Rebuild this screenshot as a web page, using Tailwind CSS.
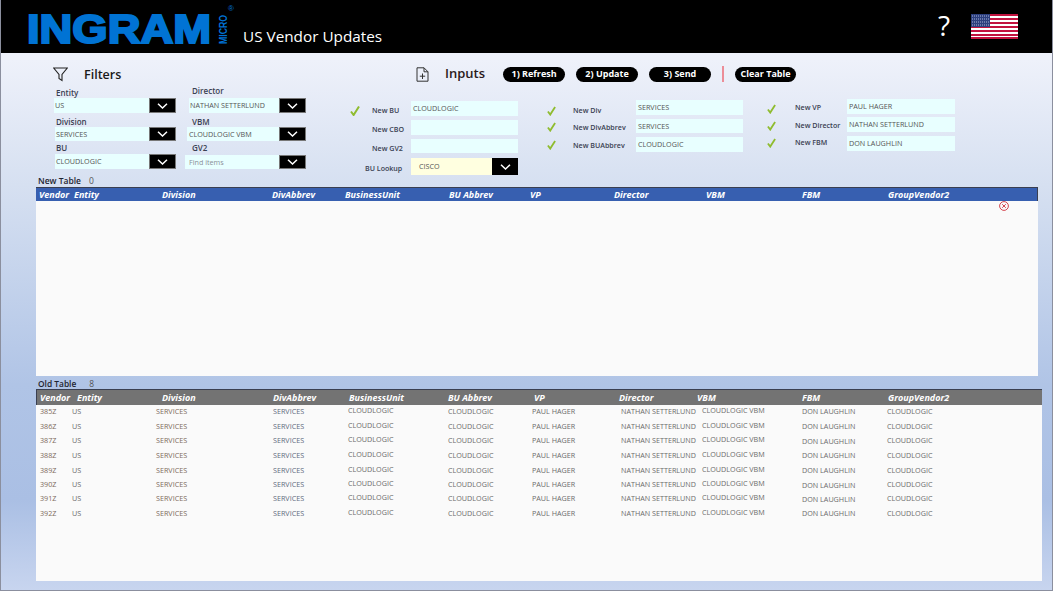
<!DOCTYPE html>
<html lang="en">
<head>
    <meta charset="UTF-8">
    <title>US Vendor Updates</title>
    <script src="https://cdn.jsdelivr.net/npm/@tailwindcss/browser@4"></script>
</head>
<body class="m-0 overflow-hidden font-['Open_Sans',sans-serif]">
<div class="flex h-[591px] w-[1053px] flex-col border-x border-b border-[#8b8f9e] bg-[linear-gradient(180deg,#eff2fb_0,#eef1fa_60px,#d6e0f1_185px,#b0c4e6_385px,#aabfe4_500px,#c8d5ef_591px)]">

    <!-- Header -->
    <header class="relative flex h-[53px] shrink-0 items-center bg-black">
        <svg class="ml-[25px] h-[53px] w-[215px] shrink-0" viewBox="0 0 215 53">
            <text x="1" y="43" textLength="184" lengthAdjust="spacingAndGlyphs" font-family="Liberation Sans" font-weight="700" font-size="41" fill="#0073d4" stroke="#0073d4" stroke-width="2.2">INGRAM</text>
            <text transform="translate(201 44) rotate(-90)" textLength="29" lengthAdjust="spacingAndGlyphs" font-family="Liberation Sans" font-weight="700" font-size="10" fill="#0073d4">MICRO</text>
            <text x="202" y="11" font-family="Liberation Sans" font-size="8" fill="#0073d4">®</text>
        </svg>
        <h1 class="ml-[2px] mt-[19px] text-[15.3px] leading-[20px] text-white">US Vendor Updates</h1>
        <span class="absolute left-[937px] top-[8px] text-[28px] leading-[34px] font-medium text-white">?</span>
        <svg class="absolute left-[970px] top-[14px] h-[25px] w-[47px]" viewBox="0 0 47 25">
            <rect width="47" height="25" fill="#fff"/>
            <path d="M0 1h47M0 5h47M0 9h47M0 13h47M0 17h47M0 21h47M0 24h47" stroke="#c2123f" stroke-width="2"/>
            <rect width="19" height="13" fill="#2c3f7e"/>
            <path d="M1 2h17M1 5h17M1 8h17M1 11h17" stroke="#aab4d6" stroke-width="1" stroke-dasharray="1 1"/>
        </svg>
    </header>

    <!-- Filters and inputs -->
    <section class="flex h-[134px] shrink-0 text-[8px] font-semibold text-[#3a4152]">
        <div class="ml-[52px] w-[263px] shrink-0">
            <div class="flex h-[35px] items-end gap-[16px] pb-[4px] text-[12.5px] leading-[18px] font-semibold text-[#1a1a1a]">
                <svg class="mb-[2px] h-[15px] w-[15px]" viewBox="0 0 15 15" fill="none" stroke="#222" stroke-width="1.1"><path d="M.7 1h13.6L9 7.5V13.5L6 11.5V7.5z"/></svg>
                <span>Filters</span>
            </div>
            <div class="flex">
                <div class="w-[136px] shrink-0">
                    <p class="h-[10px] pl-[3px] text-[8px] leading-[10px]">Entity</p>
                    <div class="flex h-[15px]"><div class="ml-[1px] flex w-[95px] items-center bg-[#e8ffff] pl-[1px] text-[7.2px] font-normal text-[#555]">US</div><div class="flex w-[27px] items-center justify-center border border-[#777] bg-black"><svg class="h-[6px] w-[11px]" viewBox="0 0 11 6" fill="none" stroke="#fff" stroke-width="1.5"><path d="M1 .8 5.5 5 10 .8"/></svg></div></div>
                    <p class="mt-[4px] h-[10px] pl-[3px] text-[8px] leading-[10px]">Division</p>
                    <div class="flex h-[14px]"><div class="ml-[2px] flex w-[94px] items-center bg-[#e8ffff] pl-[1px] text-[7.2px] font-normal text-[#555]">SERVICES</div><div class="flex w-[27px] items-center justify-center border border-[#777] bg-black"><svg class="h-[6px] w-[11px]" viewBox="0 0 11 6" fill="none" stroke="#fff" stroke-width="1.5"><path d="M1 .8 5.5 5 10 .8"/></svg></div></div>
                    <p class="mt-[2px] h-[10px] pl-[3px] text-[8px] leading-[10px]">BU</p>
                    <div class="mt-[1px] flex h-[15px]"><div class="ml-[2px] flex w-[94px] items-center bg-[#e8ffff] pl-[1px] text-[7.2px] font-normal text-[#555]">CLOUDLOGIC</div><div class="flex w-[27px] items-center justify-center border border-[#777] bg-black"><svg class="h-[6px] w-[11px]" viewBox="0 0 11 6" fill="none" stroke="#fff" stroke-width="1.5"><path d="M1 .8 5.5 5 10 .8"/></svg></div></div>
                </div>
                <div class="w-[127px] shrink-0">
                    <p class="-mt-[2px] h-[10px] pl-[3px] text-[8px] leading-[10px]">Director</p>
                    <div class="mt-[2px] flex h-[15px]"><div class="flex w-[90px] items-center bg-[#e8ffff] pl-[1px] text-[7.2px] font-normal text-[#555]">NATHAN SETTERLUND</div><div class="flex w-[27px] items-center justify-center border border-[#777] bg-black"><svg class="h-[6px] w-[11px]" viewBox="0 0 11 6" fill="none" stroke="#fff" stroke-width="1.5"><path d="M1 .8 5.5 5 10 .8"/></svg></div></div>
                    <p class="mt-[4px] h-[10px] pl-[3px] text-[8px] leading-[10px]">VBM</p>
                    <div class="flex h-[14px]"><div class="-ml-[2px] flex w-[92px] items-center bg-[#e8ffff] pl-[2px] text-[7.2px] font-normal text-[#555]">CLOUDLOGIC VBM</div><div class="flex w-[27px] items-center justify-center border border-[#777] bg-black"><svg class="h-[6px] w-[11px]" viewBox="0 0 11 6" fill="none" stroke="#fff" stroke-width="1.5"><path d="M1 .8 5.5 5 10 .8"/></svg></div></div>
                    <p class="mt-[2px] h-[10px] pl-[3px] text-[8px] leading-[10px]">GV2</p>
                    <div class="mt-[2px] flex h-[14px]"><div class="-ml-[4px] flex w-[94px] items-center bg-[#e8ffff] pl-[4px] text-[7.2px] font-normal text-[#8a8f98]">Find items</div><div class="flex w-[27px] items-center justify-center border border-[#777] bg-black"><svg class="h-[6px] w-[11px]" viewBox="0 0 11 6" fill="none" stroke="#fff" stroke-width="1.5"><path d="M1 .8 5.5 5 10 .8"/></svg></div></div>
                </div>
            </div>
        </div>

        <div class="w-[700px] shrink-0">
            <!-- Title and action buttons -->
            <div class="flex h-[29px] items-end pl-[100px]">
                <svg class="h-[15px] w-[13px]" viewBox="0 0 13 15" fill="none" stroke="#333" stroke-width="1"><path d="M1 .8h7l4 4v9.4H1zM8 .8v4h4M6.5 6.5v5.5M3.8 9.2h5.4"/></svg>
                <span class="ml-[16px] text-[13px] leading-[17px] font-semibold text-[#2a1a1a]">Inputs</span>
                <div class="ml-[18px] flex items-center text-[9px] font-bold text-white">
                    <span class="flex h-[15px] w-[62px] items-center justify-center rounded-full bg-black">1) Refresh</span>
                    <span class="ml-[11px] flex h-[15px] w-[62px] items-center justify-center rounded-full bg-black">2) Update</span>
                    <span class="ml-[11px] flex h-[15px] w-[62px] items-center justify-center rounded-full bg-black">3) Send</span>
                    <span class="ml-[11px] h-[16px] w-[2px] bg-[#ec8d98]"></span>
                    <span class="ml-[11px] flex h-[15px] w-[61px] items-center justify-center rounded-full bg-black">Clear Table</span>
                </div>
            </div>
            <!-- Input columns -->
            <div class="flex pt-[19px]">
                <div class="ml-[33px] w-[175px] shrink-0">
                    <div class="flex h-[15px] items-center"><svg class="ml-[1px] mt-[4px] h-[10px] w-[10px]" viewBox="0 0 10 10" fill="none" stroke="#8fbc2f" stroke-width="2"><path d="M1 5.5 3.6 9 9 .5"/></svg><span class="ml-[12px] mt-[4px] w-[39px] text-[7.1px]">New BU</span><div class="flex h-[15px] w-[107px] items-center bg-[#e8ffff] pl-[2px] text-[7.2px] font-normal text-[#555]">CLOUDLOGIC</div></div>
                    <div class="mt-[4px] flex h-[15px] items-center"><span class="ml-[23px] mt-[4px] w-[39px] text-[7.1px]">New CBO</span><div class="h-[15px] w-[107px] bg-[#e8ffff]"></div></div>
                    <div class="mt-[4px] flex h-[14px] items-center"><span class="ml-[23px] mt-[4px] w-[39px] text-[7.1px]">New GV2</span><div class="h-[14px] w-[107px] bg-[#e8ffff]"></div></div>
                    <div class="mt-[5px] flex h-[17px] items-center"><span class="ml-[16px] mt-[4px] w-[46px] text-[7.1px]">BU Lookup</span><div class="flex h-[17px] w-[81px] items-center bg-[#ffffe0] pl-[8px] text-[7.2px] font-normal text-[#555]">CISCO</div><div class="flex h-[17px] w-[26px] items-center justify-center bg-black"><svg class="h-[6px] w-[11px]" viewBox="0 0 11 6" fill="none" stroke="#fff" stroke-width="1.5"><path d="M1 .8 5.5 5 10 .8"/></svg></div></div>
                </div>
                <div class="ml-[23px] w-[220px] shrink-0 -mt-[1px]">
                    <div class="flex h-[15px] items-center"><svg class="mt-[6px] h-[10px] w-[9px]" viewBox="0 0 10 10" fill="none" stroke="#8fbc2f" stroke-width="2"><path d="M1 5.5 3.6 9 9 .5"/></svg><span class="ml-[17px] mt-[6px] w-[63px] text-[7.1px]">New Div</span><div class="flex h-[15px] w-[107px] items-center bg-[#e8ffff] pl-[2px] text-[7.2px] font-normal text-[#555]">SERVICES</div></div>
                    <div class="mt-[4px] flex h-[14px] items-center"><svg class="mt-[2px] h-[10px] w-[9px]" viewBox="0 0 10 10" fill="none" stroke="#8fbc2f" stroke-width="2"><path d="M1 5.5 3.6 9 9 .5"/></svg><span class="ml-[17px] mt-[2px] w-[63px] text-[7.1px]">New DivAbbrev</span><div class="flex h-[14px] w-[107px] items-center bg-[#e8ffff] pl-[2px] text-[7.2px] font-normal text-[#555]">SERVICES</div></div>
                    <div class="mt-[4px] flex h-[15px] items-center"><svg class="h-[10px] w-[9px]" viewBox="0 0 10 10" fill="none" stroke="#8fbc2f" stroke-width="2"><path d="M1 5.5 3.6 9 9 .5"/></svg><span class="ml-[17px] mt-[2px] w-[63px] text-[7.1px]">New BUAbbrev</span><div class="flex h-[15px] w-[107px] items-center bg-[#e8ffff] pl-[2px] text-[7.2px] font-normal text-[#555]">CLOUDLOGIC</div></div>
                </div>
                <div class="w-[190px] shrink-0 -mt-[2px]">
                    <div class="flex h-[15px] items-center"><svg class="mt-[4px] h-[10px] w-[9px]" viewBox="0 0 10 10" fill="none" stroke="#8fbc2f" stroke-width="2"><path d="M1 5.5 3.6 9 9 .5"/></svg><span class="ml-[19px] mt-[2px] w-[52px] text-[7.1px]">New VP</span><div class="flex h-[15px] w-[108px] items-center bg-[#e8ffff] pl-[2px] text-[7.2px] font-normal text-[#555]">PAUL HAGER</div></div>
                    <div class="mt-[3px] flex h-[15px] items-center"><svg class="mt-[2px] h-[10px] w-[9px]" viewBox="0 0 10 10" fill="none" stroke="#8fbc2f" stroke-width="2"><path d="M1 5.5 3.6 9 9 .5"/></svg><span class="ml-[19px] mt-[2px] w-[52px] text-[7.1px]">New Director</span><div class="flex h-[15px] w-[108px] items-center bg-[#e8ffff] pl-[2px] text-[7.2px] font-normal text-[#555]">NATHAN SETTERLUND</div></div>
                    <div class="mt-[4px] flex h-[15px] items-center"><svg class="-mt-[2px] h-[10px] w-[9px]" viewBox="0 0 10 10" fill="none" stroke="#8fbc2f" stroke-width="2"><path d="M1 5.5 3.6 9 9 .5"/></svg><span class="ml-[19px] -mt-[2px] w-[52px] text-[7.1px]">New FBM</span><div class="flex h-[15px] w-[108px] items-center bg-[#e8ffff] pl-[2px] text-[7.2px] font-normal text-[#555]">DON LAUGHLIN</div></div>
                </div>
            </div>
        </div>
    </section>

    <!-- New table -->
    <div class="relative ml-[35px] h-[189px] w-[1002px] shrink-0 bg-[#fafafa]">
        <p class="absolute -top-[11px] left-[2px] flex text-[8.5px] leading-[10px] font-semibold text-[#1f2430]">New Table<span class="ml-[8px] font-normal text-[#555]">0</span></p>
        <div class="h-[14px] border-t border-r border-[#3a3f50] bg-[#375fb0] text-[9px] leading-[13px] font-bold text-white italic">
            <div class="grid grid-cols-[35px_88px_110px_73px_104px_81px_84px_92px_96px_86px_1fr] pl-[3px]">
                <span>Vendor</span><span>Entity</span><span>Division</span><span>DivAbbrev</span><span>BusinessUnit</span><span>BU Abbrev</span><span>VP</span><span>Director</span><span>VBM</span><span>FBM</span><span>GroupVendor2</span>
            </div>
        </div>
        <svg class="absolute left-[963px] top-[14px] h-[10px] w-[10px]" viewBox="0 0 10 10" fill="none" stroke="#d0323c" stroke-width=".9"><circle cx="5" cy="5" r="4.4"/><path d="M3.2 3.2l3.6 3.6M6.8 3.2 3.2 6.8"/></svg>
    </div>

    <!-- Old table -->
    <div class="relative ml-[35px] mt-[13px] h-[192px] w-[1006px] shrink-0 bg-[#fafafa]">
        <p class="absolute -top-[10px] left-[2px] flex text-[8.4px] leading-[10px] font-semibold text-[#1f2430]">Old Table<span class="ml-[13px] font-normal text-[#555]">8</span></p>
        <div class="h-[16px] border-t border-l border-[#3a3f50] bg-[#737373] text-[9px] leading-[15px] font-bold text-white italic">
            <div class="grid grid-cols-[37px_85px_111px_76px_99px_86px_85px_78px_105px_86px_1fr] pl-[3px]">
                <span>Vendor</span><span>Entity</span><span>Division</span><span>DivAbbrev</span><span>BusinessUnit</span><span>BU Abbrev</span><span>VP</span><span>Director</span><span>VBM</span><span>FBM</span><span>GroupVendor2</span>
            </div>
        </div>
        <div id="rows" class="-mt-[2px] text-[7.2px] leading-[10px] text-[#6b6b6b]"></div>
    </div>
</div>

<script>
    // one row per vendor code, the rest of the values repeat
    const vendors = ["385Z", "386Z", "387Z", "388Z", "389Z", "390Z", "391Z", "392Z"];
    const heights = [15, 15, 14, 15, 15, 14, 14, 15];
    const rows = document.getElementById("rows");

    vendors.forEach((code, i) => {
        rows.innerHTML += `
        <div class="grid grid-cols-[32px_84px_117px_75px_100px_84px_89px_81px_100px_85px_1fr] pl-[4px] items-center" style="height:${heights[i]}px">
            <span class="text-[#7d6b5c]">${code}</span><span>US</span><span class="text-[#7d6b5c]">SERVICES</span><span class="text-[#5f6b80]">SERVICES</span>
            <span class="pb-[2px]">CLOUDLOGIC</span><span>CLOUDLOGIC</span><span>PAUL HAGER</span><span>NATHAN SETTERLUND</span>
            <span class="pb-[2px]">CLOUDLOGIC VBM</span><span class="pt-[1px]">DON LAUGHLIN</span><span>CLOUDLOGIC</span>
        </div>`;
    });
</script>
</body>
</html>
